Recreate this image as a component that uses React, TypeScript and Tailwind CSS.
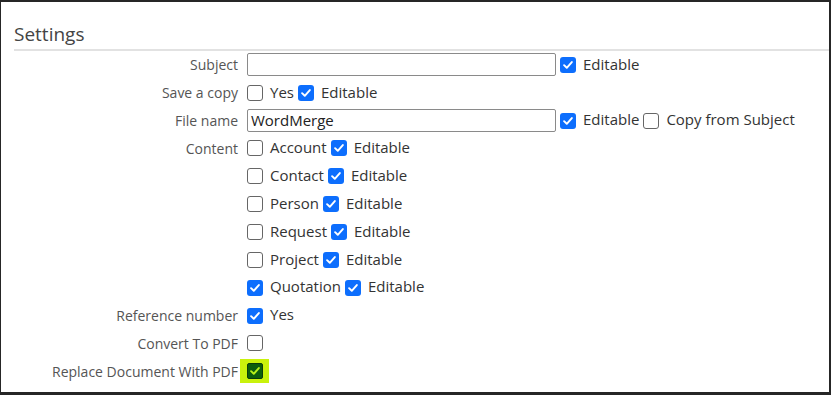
import React from "react";

const font = { fontFamily: '"Open Sans", "Noto Sans", sans-serif' };

const Box = ({ checked = false, className = "" }: { checked?: boolean; className?: string }) =>
  checked ? (
    <span className={`inline-flex h-[16px] w-[16px] shrink-0 items-center justify-center rounded-[3px] bg-[#0d6efd] ${className}`}>
      <svg viewBox="0 0 16 16" className="h-[14px] w-[14px]">
        <polyline points="3.5,8.2 6.6,11.2 12.4,4.6" fill="none" stroke="#fff" strokeWidth="2.2" strokeLinecap="round" strokeLinejoin="round" />
      </svg>
    </span>
  ) : (
    <span className={`inline-block h-[16px] w-[16px] shrink-0 rounded-[3px] border border-[#666] bg-white ${className}`} />
  );

const Opt = ({ checked = false, label }: { checked?: boolean; label: string }) => (
  <span className="flex items-center">
    <Box checked={checked} />
    <span className="ml-[7px] mr-[4px] -mt-[2px] text-[15px] text-[#333]">{label}</span>
  </span>
);

const Row = ({ label, children }: { label?: string; children: React.ReactNode }) => (
  <div className="flex h-[27.85px] items-center">
    <div className="w-[237px] shrink-0 text-right text-[#555]">{label}</div>
    <div className="ml-[9px] flex items-center">{children}</div>
  </div>
);

const Input = ({ value = "" }: { value?: string }) => (
  <div className="flex h-[23px] w-[309px] items-center rounded-[2px] border border-[#8a8a8a] bg-white px-[3px] text-[15px] text-[#222]">
    {value}
  </div>
);

export default function App() {
  return (
    <div className="h-[395px] w-[831px] bg-[#262626] pb-[3px] pl-[1px] pr-[2px] pt-[2px]" style={font}>
      <div className="h-full w-full bg-white text-[14px]">
        <div className="ml-[13px] border-b-2 border-[#e2e2e2] pt-[20px] pb-[3px]">
          <h2 className="text-[19px] leading-[24px] text-[#444]">Settings</h2>
        </div>
        <div>
          <Row label="Subject">
            <Input />
            <span className="ml-[4px]"><Opt checked label="Editable" /></span>
          </Row>
          <Row label="Save a copy">
            <Opt label="Yes" />
            <Opt checked label="Editable" />
          </Row>
          <Row label="File name">
            <Input value="WordMerge" />
            <span className="ml-[4px]"><Opt checked label="Editable" /></span>
            <Opt label="Copy from Subject" />
          </Row>
          <Row label="Content">
            <Opt label="Account" />
            <Opt checked label="Editable" />
          </Row>
          <Row>
            <Opt label="Contact" />
            <Opt checked label="Editable" />
          </Row>
          <Row>
            <Opt label="Person" />
            <Opt checked label="Editable" />
          </Row>
          <Row>
            <Opt label="Request" />
            <Opt checked label="Editable" />
          </Row>
          <Row>
            <Opt label="Project" />
            <Opt checked label="Editable" />
          </Row>
          <Row>
            <Opt checked label="Quotation" />
            <Opt checked label="Editable" />
          </Row>
          <Row label="Reference number">
            <Opt checked label="Yes" />
          </Row>
          <Row label="Convert To PDF">
            <Box />
          </Row>
          <Row label="Replace Document With PDF">
            <span className="-ml-[7px] flex h-[24px] w-[29px] items-center justify-center bg-[#c9f20c]">
              <span className="flex h-[16px] w-[16px] items-center justify-center rounded-[2px] border border-[#0a3d0a] bg-[#0d5e0d]">
                <svg viewBox="0 0 16 16" className="h-[14px] w-[14px]">
                  <polyline points="3.5,8.2 6.6,11.2 12.4,4.6" fill="none" stroke="#b8f21a" strokeWidth="2.2" strokeLinecap="round" strokeLinejoin="round" />
                </svg>
              </span>
            </span>
          </Row>
        </div>
      </div>
    </div>
  );
}
